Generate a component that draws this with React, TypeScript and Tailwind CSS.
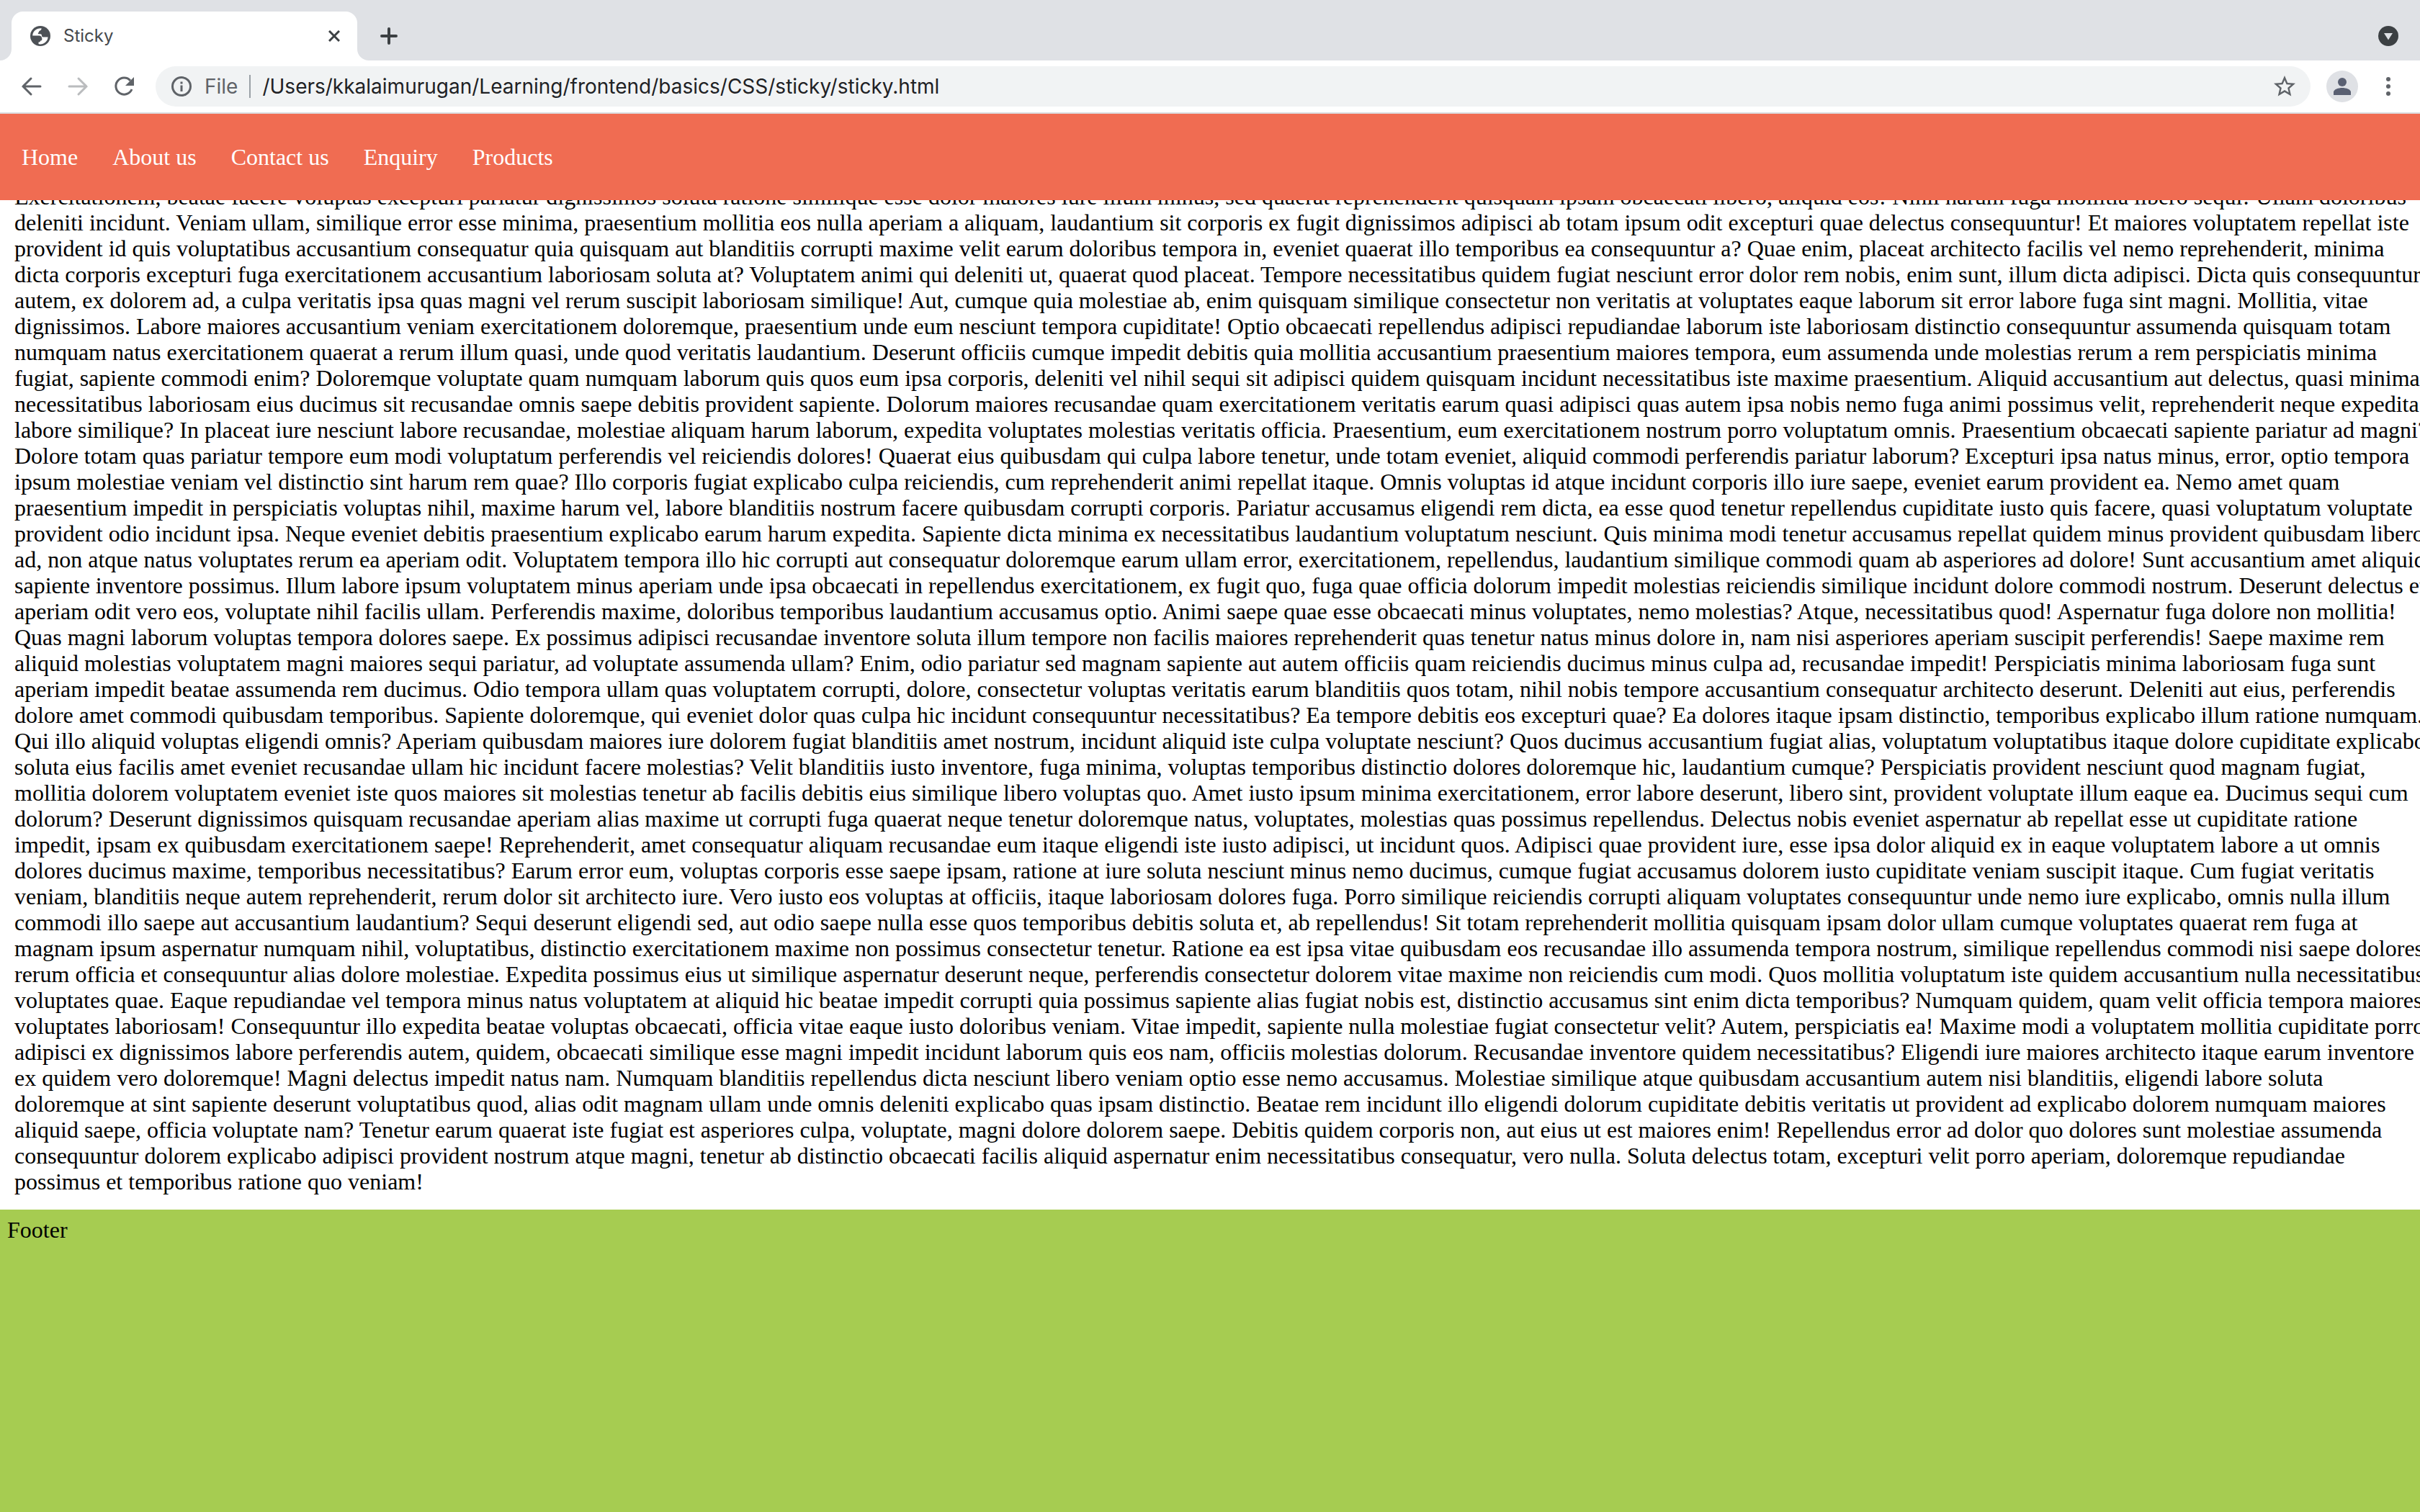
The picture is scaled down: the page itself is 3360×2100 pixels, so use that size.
import React from "react";

const lines = [
  "Exercitationem, beatae facere voluptas excepturi pariatur dignissimos soluta ratione similique esse dolor maiores iure illum minus, sed quaerat reprehenderit quisquam ipsam obcaecati libero, aliquid eos! Nihil harum fuga mollitia libero sequi! Ullam doloribus",
  "deleniti incidunt. Veniam ullam, similique error esse minima, praesentium mollitia eos nulla aperiam a aliquam, laudantium sit corporis ex fugit dignissimos adipisci ab totam ipsum odit excepturi quae delectus consequuntur! Et maiores voluptatem repellat iste",
  "provident id quis voluptatibus accusantium consequatur quia quisquam aut blanditiis corrupti maxime velit earum doloribus tempora in, eveniet quaerat illo temporibus ea consequuntur a? Quae enim, placeat architecto facilis vel nemo reprehenderit, minima",
  "dicta corporis excepturi fuga exercitationem accusantium laboriosam soluta at? Voluptatem animi qui deleniti ut, quaerat quod placeat. Tempore necessitatibus quidem fugiat nesciunt error dolor rem nobis, enim sunt, illum dicta adipisci. Dicta quis consequuntur",
  "autem, ex dolorem ad, a culpa veritatis ipsa quas magni vel rerum suscipit laboriosam similique! Aut, cumque quia molestiae ab, enim quisquam similique consectetur non veritatis at voluptates eaque laborum sit error labore fuga sint magni. Mollitia, vitae",
  "dignissimos. Labore maiores accusantium veniam exercitationem doloremque, praesentium unde eum nesciunt tempora cupiditate! Optio obcaecati repellendus adipisci repudiandae laborum iste laboriosam distinctio consequuntur assumenda quisquam totam",
  "numquam natus exercitationem quaerat a rerum illum quasi, unde quod veritatis laudantium. Deserunt officiis cumque impedit debitis quia mollitia accusantium praesentium maiores tempora, eum assumenda unde molestias rerum a rem perspiciatis minima",
  "fugiat, sapiente commodi enim? Doloremque voluptate quam numquam laborum quis quos eum ipsa corporis, deleniti vel nihil sequi sit adipisci quidem quisquam incidunt necessitatibus iste maxime praesentium. Aliquid accusantium aut delectus, quasi minima",
  "necessitatibus laboriosam eius ducimus sit recusandae omnis saepe debitis provident sapiente. Dolorum maiores recusandae quam exercitationem veritatis earum quasi adipisci quas autem ipsa nobis nemo fuga animi possimus velit, reprehenderit neque expedita",
  "labore similique? In placeat iure nesciunt labore recusandae, molestiae aliquam harum laborum, expedita voluptates molestias veritatis officia. Praesentium, eum exercitationem nostrum porro voluptatum omnis. Praesentium obcaecati sapiente pariatur ad magni?",
  "Dolore totam quas pariatur tempore eum modi voluptatum perferendis vel reiciendis dolores! Quaerat eius quibusdam qui culpa labore tenetur, unde totam eveniet, aliquid commodi perferendis pariatur laborum? Excepturi ipsa natus minus, error, optio tempora",
  "ipsum molestiae veniam vel distinctio sint harum rem quae? Illo corporis fugiat explicabo culpa reiciendis, cum reprehenderit animi repellat itaque. Omnis voluptas id atque incidunt corporis illo iure saepe, eveniet earum provident ea. Nemo amet quam",
  "praesentium impedit in perspiciatis voluptas nihil, maxime harum vel, labore blanditiis nostrum facere quibusdam corrupti corporis. Pariatur accusamus eligendi rem dicta, ea esse quod tenetur repellendus cupiditate iusto quis facere, quasi voluptatum voluptate",
  "provident odio incidunt ipsa. Neque eveniet debitis praesentium explicabo earum harum expedita. Sapiente dicta minima ex necessitatibus laudantium voluptatum nesciunt. Quis minima modi tenetur accusamus repellat quidem minus provident quibusdam libero",
  "ad, non atque natus voluptates rerum ea aperiam odit. Voluptatem tempora illo hic corrupti aut consequatur doloremque earum ullam error, exercitationem, repellendus, laudantium similique commodi quam ab asperiores ad dolore! Sunt accusantium amet aliquid",
  "sapiente inventore possimus. Illum labore ipsum voluptatem minus aperiam unde ipsa obcaecati in repellendus exercitationem, ex fugit quo, fuga quae officia dolorum impedit molestias reiciendis similique incidunt dolore commodi nostrum. Deserunt delectus et",
  "aperiam odit vero eos, voluptate nihil facilis ullam. Perferendis maxime, doloribus temporibus laudantium accusamus optio. Animi saepe quae esse obcaecati minus voluptates, nemo molestias? Atque, necessitatibus quod! Aspernatur fuga dolore non mollitia!",
  "Quas magni laborum voluptas tempora dolores saepe. Ex possimus adipisci recusandae inventore soluta illum tempore non facilis maiores reprehenderit quas tenetur natus minus dolore in, nam nisi asperiores aperiam suscipit perferendis! Saepe maxime rem",
  "aliquid molestias voluptatem magni maiores sequi pariatur, ad voluptate assumenda ullam? Enim, odio pariatur sed magnam sapiente aut autem officiis quam reiciendis ducimus minus culpa ad, recusandae impedit! Perspiciatis minima laboriosam fuga sunt",
  "aperiam impedit beatae assumenda rem ducimus. Odio tempora ullam quas voluptatem corrupti, dolore, consectetur voluptas veritatis earum blanditiis quos totam, nihil nobis tempore accusantium consequatur architecto deserunt. Deleniti aut eius, perferendis",
  "dolore amet commodi quibusdam temporibus. Sapiente doloremque, qui eveniet dolor quas culpa hic incidunt consequuntur necessitatibus? Ea tempore debitis eos excepturi quae? Ea dolores itaque ipsam distinctio, temporibus explicabo illum ratione numquam.",
  "Qui illo aliquid voluptas eligendi omnis? Aperiam quibusdam maiores iure dolorem fugiat blanditiis amet nostrum, incidunt aliquid iste culpa voluptate nesciunt? Quos ducimus accusantium fugiat alias, voluptatum voluptatibus itaque dolore cupiditate explicabo",
  "soluta eius facilis amet eveniet recusandae ullam hic incidunt facere molestias? Velit blanditiis iusto inventore, fuga minima, voluptas temporibus distinctio dolores doloremque hic, laudantium cumque? Perspiciatis provident nesciunt quod magnam fugiat,",
  "mollitia dolorem voluptatem eveniet iste quos maiores sit molestias tenetur ab facilis debitis eius similique libero voluptas quo. Amet iusto ipsum minima exercitationem, error labore deserunt, libero sint, provident voluptate illum eaque ea. Ducimus sequi cum",
  "dolorum? Deserunt dignissimos quisquam recusandae aperiam alias maxime ut corrupti fuga quaerat neque tenetur doloremque natus, voluptates, molestias quas possimus repellendus. Delectus nobis eveniet aspernatur ab repellat esse ut cupiditate ratione",
  "impedit, ipsam ex quibusdam exercitationem saepe! Reprehenderit, amet consequatur aliquam recusandae eum itaque eligendi iste iusto adipisci, ut incidunt quos. Adipisci quae provident iure, esse ipsa dolor aliquid ex in eaque voluptatem labore a ut omnis",
  "dolores ducimus maxime, temporibus necessitatibus? Earum error eum, voluptas corporis esse saepe ipsam, ratione at iure soluta nesciunt minus nemo ducimus, cumque fugiat accusamus dolorem iusto cupiditate veniam suscipit itaque. Cum fugiat veritatis",
  "veniam, blanditiis neque autem reprehenderit, rerum dolor sit architecto iure. Vero iusto eos voluptas at officiis, itaque laboriosam dolores fuga. Porro similique reiciendis corrupti aliquam voluptates consequuntur unde nemo iure explicabo, omnis nulla illum",
  "commodi illo saepe aut accusantium laudantium? Sequi deserunt eligendi sed, aut odio saepe nulla esse quos temporibus debitis soluta et, ab repellendus! Sit totam reprehenderit mollitia quisquam ipsam dolor ullam cumque voluptates quaerat rem fuga at",
  "magnam ipsum aspernatur numquam nihil, voluptatibus, distinctio exercitationem maxime non possimus consectetur tenetur. Ratione ea est ipsa vitae quibusdam eos recusandae illo assumenda tempora nostrum, similique repellendus commodi nisi saepe dolores",
  "rerum officia et consequuntur alias dolore molestiae. Expedita possimus eius ut similique aspernatur deserunt neque, perferendis consectetur dolorem vitae maxime non reiciendis cum modi. Quos mollitia voluptatum iste quidem accusantium nulla necessitatibus",
  "voluptates quae. Eaque repudiandae vel tempora minus natus voluptatem at aliquid hic beatae impedit corrupti quia possimus sapiente alias fugiat nobis est, distinctio accusamus sint enim dicta temporibus? Numquam quidem, quam velit officia tempora maiores",
  "voluptates laboriosam! Consequuntur illo expedita beatae voluptas obcaecati, officia vitae eaque iusto doloribus veniam. Vitae impedit, sapiente nulla molestiae fugiat consectetur velit? Autem, perspiciatis ea! Maxime modi a voluptatem mollitia cupiditate porro",
  "adipisci ex dignissimos labore perferendis autem, quidem, obcaecati similique esse magni impedit incidunt laborum quis eos nam, officiis molestias dolorum. Recusandae inventore quidem necessitatibus? Eligendi iure maiores architecto itaque earum inventore",
  "ex quidem vero doloremque! Magni delectus impedit natus nam. Numquam blanditiis repellendus dicta nesciunt libero veniam optio esse nemo accusamus. Molestiae similique atque quibusdam accusantium autem nisi blanditiis, eligendi labore soluta",
  "doloremque at sint sapiente deserunt voluptatibus quod, alias odit magnam ullam unde omnis deleniti explicabo quas ipsam distinctio. Beatae rem incidunt illo eligendi dolorum cupiditate debitis veritatis ut provident ad explicabo dolorem numquam maiores",
  "aliquid saepe, officia voluptate nam? Tenetur earum quaerat iste fugiat est asperiores culpa, voluptate, magni dolore dolorem saepe. Debitis quidem corporis non, aut eius ut est maiores enim! Repellendus error ad dolor quo dolores sunt molestiae assumenda",
  "consequuntur dolorem explicabo adipisci provident nostrum atque magni, tenetur ab distinctio obcaecati facilis aliquid aspernatur enim necessitatibus consequatur, vero nulla. Soluta delectus totam, excepturi velit porro aperiam, doloremque repudiandae",
  "possimus et temporibus ratione quo veniam!",
];

const links = ["Home", "About us", "Contact us", "Enquiry", "Products"];

function TabStrip() {
  return (
    <div className="flex h-[84px] items-stretch bg-[#dfe1e5] pl-4 pr-[30px]">
      <div className="relative mt-4 flex w-[480px] items-center rounded-t-[16px] bg-white pl-[26px] pr-[24px]">
        <svg className="absolute bottom-0 -left-4 size-4" viewBox="0 0 16 16" fill="#fff" aria-hidden="true">
          <path d="M16 0v16H0A16 16 0 0 0 16 0z" />
        </svg>
        <svg className="absolute bottom-0 -right-4 size-4" viewBox="0 0 16 16" fill="#fff" aria-hidden="true">
          <path d="M0 0v16h16A16 16 0 0 1 0 0z" />
        </svg>
        <svg className="size-7" viewBox="0 0 28 28" aria-hidden="true">
          <circle cx="14" cy="14" r="14" fill="#4d5156" />
          <path
            d="M3.200 13.500C3.400 7.500 8 3 15.500 3.200c.3 1.700-.8 2.800-2.500 3.600-1.200.6-.6 2-1.800 2.600-.9.5-.4 1.600.6 1.800H14c1.600 0 2 1 2 2.600 0 1.400 1.300 1.700 2.600 1.700h6c-.3 5.500-5 10-11.100 10l-2-.4v-2.600c1.500 0 2.600-.6 2.600-2 1.500 0 2.300-.8 2.300-2.300 0-2.600-1.800-4.700-4-4.700z"
            fill="#fff"
          />
        </svg>
        <span className="ml-[18px] flex-1 text-[24px] leading-8 text-[#45484c]">Sticky</span>
        <button aria-label="Close tab" className="size-4">
          <svg viewBox="0 0 16 16" className="size-4" stroke="#3c4043" strokeWidth="3" fill="none">
            <path d="M1 1l14 14M15 1L1 15" />
          </svg>
        </button>
      </div>
      <button aria-label="New tab" className="ml-8 self-center pt-4">
        <svg viewBox="0 0 24 24" className="size-6" stroke="#3c4043" strokeWidth="4" strokeLinecap="round" fill="none">
          <path d="M12 2v20M2 12h20" />
        </svg>
      </button>
      <div className="flex-1" />
      <button aria-label="Search tabs" className="self-center pt-4">
        <svg viewBox="0 0 28 28" className="size-7">
          <circle cx="14" cy="14" r="14" fill="#3c4043" />
          <path d="M8 10h12l-6 9.500z" fill="#dfe1e5" />
        </svg>
      </button>
    </div>
  );
}

function Toolbar() {
  return (
    <div className="flex h-[74px] items-center border-b-2 border-[#dadce0] bg-white pl-[28px] pr-[30px]">
      <button aria-label="Back">
        <svg viewBox="0 0 32 32" className="size-8" stroke="#5f6368" strokeWidth="3" strokeLinecap="round" fill="none">
          <path d="M28 16H4M15 5L4 16l11 11" />
        </svg>
      </button>
      <button aria-label="Forward" className="ml-8">
        <svg viewBox="0 0 32 32" className="size-8" stroke="#babcbe" strokeWidth="3" strokeLinecap="round" fill="none">
          <path d="M4 16h24M17 5l11 11-11 11" />
        </svg>
      </button>
      <button aria-label="Reload" className="ml-8">
        <svg viewBox="0 0 32 32" className="size-8">
          <path d="M27 20A11.500 11.500 0 1 1 25 8" stroke="#5f6368" strokeWidth="3" fill="none" />
          <path d="M30 3v12H18z" fill="#5f6368" />
        </svg>
      </button>
      <label className="ml-[28px] flex h-14 flex-1 items-center rounded-full bg-[#f1f3f4] pl-[22px] pr-[18px]">
        <svg viewBox="0 0 28 28" className="size-7" fill="none">
          <circle cx="14" cy="14" r="12.500" stroke="#5f6368" strokeWidth="3" />
          <path d="M14 12.500V21M14 7.500v3" stroke="#5f6368" strokeWidth="3" />
        </svg>
        <span className="ml-[18px] text-[28px] leading-8 text-[#5f6368]">File</span>
        <span className="ml-4 h-8 w-[2px] bg-[#9aa0a6]" />
        <input
          aria-label="Address"
          defaultValue="/Users/kkalaimurugan/Learning/frontend/basics/CSS/sticky/sticky.html"
          className="ml-4 h-10 min-w-0 flex-1 bg-transparent text-[28px] text-[#202124] outline-none"
        />
        <button aria-label="Bookmark this page">
          <svg viewBox="0 0 24 24" className="size-9" fill="#5f6368">
            <path d="M22 9.240l-7.190-.62L12 2 9.190 8.630 2 9.240l5.460 4.730L5.820 21 12 17.270 18.180 21l-1.630-7.030L22 9.240zM12 15.400l-3.760 2.270 1-4.280-3.320-2.880 4.380-.38L12 6.100l1.710 4.040 4.380.38-3.320 2.880 1 4.280L12 15.400z" />
          </svg>
        </button>
      </label>
      <button aria-label="Profile" className="ml-[22px] flex size-11 items-center justify-center rounded-full bg-[#dfe1e5]">
        <svg viewBox="0 0 24 24" className="size-6" fill="#5a6072">
          <circle cx="12" cy="6" r="6" />
          <path d="M0 24v-4c0-4 7-6 12-6s12 2 12 6v4z" />
        </svg>
      </button>
      <button aria-label="Menu" className="ml-7">
        <svg viewBox="0 0 28 28" className="size-7" fill="#5f6368">
          <circle cx="14" cy="4" r="3" />
          <circle cx="14" cy="14" r="3" />
          <circle cx="14" cy="24" r="3" />
        </svg>
      </button>
    </div>
  );
}

export default function App() {
  return (
    <div className="flex min-h-screen flex-col overflow-x-hidden bg-white font-['Liberation_Serif',serif] text-[32px] leading-[36px] text-black">
      <header className="font-[Inter,sans-serif]">
        <TabStrip />
        <Toolbar />
      </header>
      <nav className="z-10 flex h-[120px] items-center gap-12 bg-[#f06c52] px-[30px] text-white">
        {links.map((l) => (
          <a key={l} href="#">
            {l}
          </a>
        ))}
      </nav>
      <main className="-mt-[23px] px-5 pb-[21px]">
        <p>
          {lines.map((l) => (
            <span key={l} className="block whitespace-nowrap">
              {l}
            </span>
          ))}
        </p>
      </main>
      <footer className="flex-1 bg-[#a6cc51] p-[10px]">Footer</footer>
    </div>
  );
}
